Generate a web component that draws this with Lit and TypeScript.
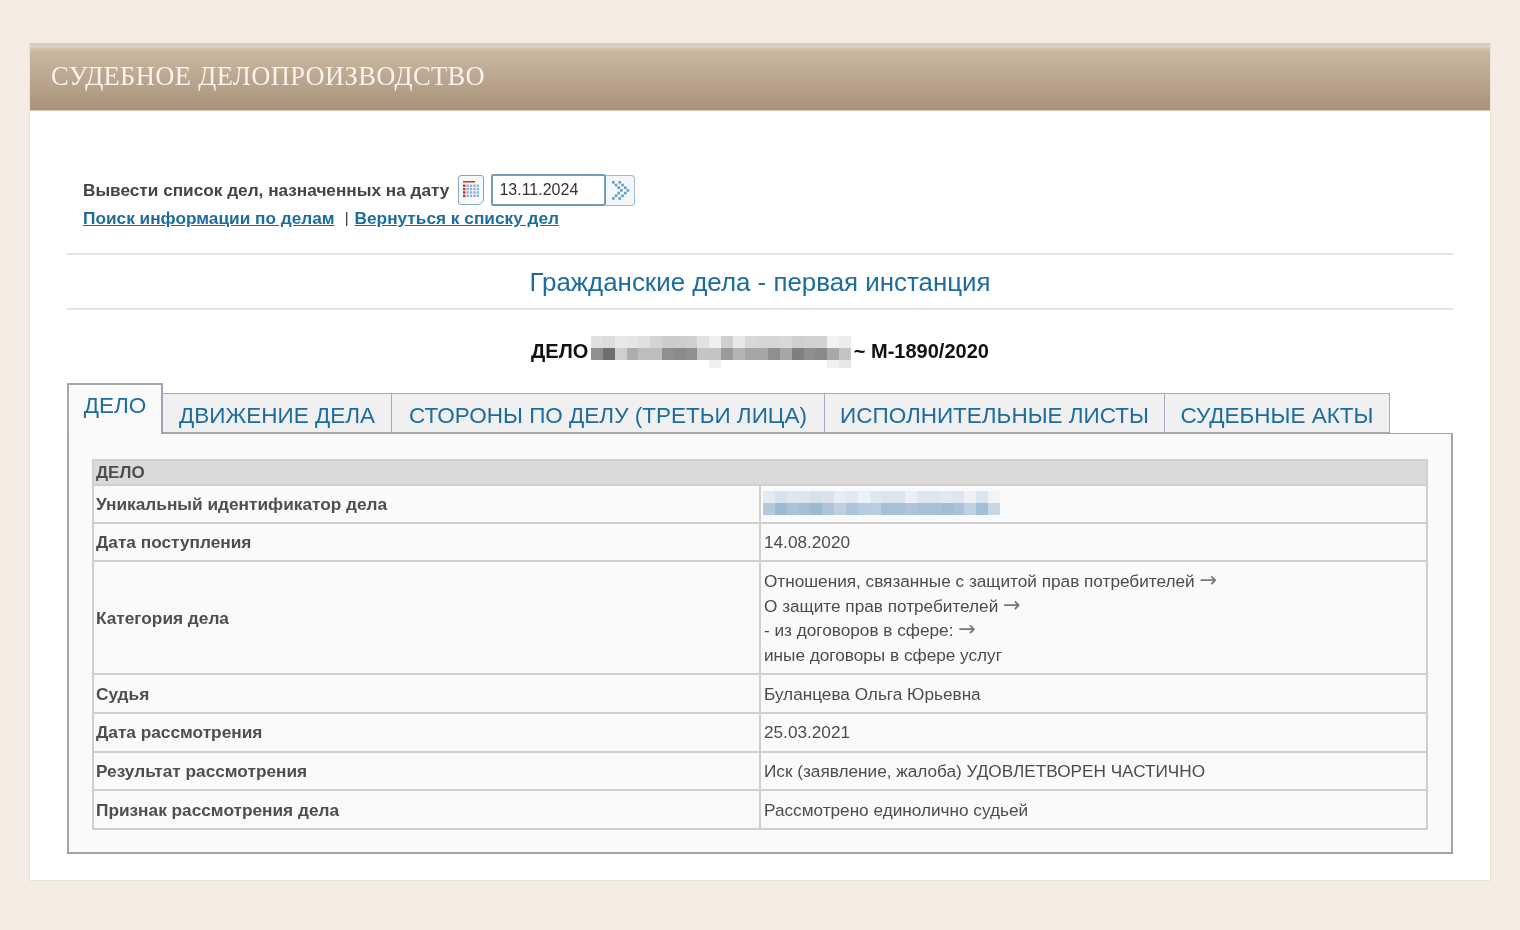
import { LitElement, html, css, svg } from "lit";
import { customElement } from "lit/decorators.js";

const GRAY_ROWS: string[][] = [
  ["#e0e0e0","#dcdcdc","#e8e8e8","#e6e6e6","#e0e0e0","#d4d4d4","#cccccc","#cdcdcd","#cfcfcf","#e2e2e2","#efefef","#cfcfcf","#e8e8e8","#d8d8d8","#d6d6d6","#d6d6d6","#d8d8d8","#cfcfcf","#d2d2d2","#d2d2d2","#f2f2f2","#ececec"],
  ["#8f8f8f","#6f6f6f","#cfcfcf","#adadad","#bdbdbd","#bdbdbd","#8f8f8f","#8a8a8a","#8f8f8f","#c4c4c4","#c4c4c4","#9a9a9a","#b4b4b4","#a6a6a6","#a6a6a6","#8f8f8f","#a6a6a6","#7f7f7f","#8f8f8f","#8a8a8a","#a8a8a8","#c4c4c4"],
  ["transparent","transparent","transparent","transparent","transparent","transparent","transparent","transparent","transparent","transparent","#f0f0f0","transparent","transparent","transparent","transparent","transparent","transparent","transparent","transparent","transparent","#f2f2f2","#e8e8e8"],
];
const BLUE_ROWS: string[][] = [
  ["#e4eaf3","#d6e2ec","#dde7ee","#dde6ef","#d5e2ec","#d9e3ee","#e8edf5","#e2e9f3","#edf2f6","#dfe7ef","#dbe5ec","#dbe5ec","#edf1f6","#dde5ee","#dde5ee","#e2e9f1","#dee5ee","#eef2f7","#dae5ee","#eff4f8"],
  ["#b3c9de","#9abad3","#a9c4da","#a2bfd6","#9ab9d2","#acc3da","#bfd1e1","#acc4da","#b7cbde","#b9cdde","#a5c0d7","#a7c1d8","#aec4da","#a9c1d8","#a9c1d8","#a0bed6","#a9c1d9","#bed0e1","#a3bfd6","#c8d7e4"],
];

const CAL_CELLS = [0, 1, 2, 3].flatMap((r) =>
  [0, 1, 2, 3, 4].map((c) => ({ r, c }))
);

@customElement("app-root")
export class AppRoot extends LitElement {
  static styles = css`
    :host {
      display: block;
      width: 1520px;
      height: 930px;
      background: #f5ece3;
      font-family: "Liberation Sans", Arial, sans-serif;
      color: #444;
      overflow: hidden;
    }
    .page { padding: 43px 29px 0; filter: blur(0.3px); }
    .card {
      height: 838px;
      box-sizing: border-box;
      background: #fff;
      border: 1px solid #ece1d6;
      border-top: none;
      display: flex;
      flex-direction: column;
    }
    .head {
      height: 68px;
      box-sizing: border-box;
      background: linear-gradient(#d8cbbb 0, #d8cbbb 1px, #ddd2c5 4px, #cfbfaa 6px, #c9b7a0 10px, #a9927a 100%);
      border-bottom: 1px solid #d6c7b6;
      display: flex;
      align-items: center;
      padding-left: 21px;
      font-family: "Liberation Serif", serif;
      font-size: 26.5px;
      letter-spacing: 0.36px;
      color: #f8f3ec;
    }
    .body { padding: 0 37px; display: flex; flex-direction: column; }
    .filters { padding: 63px 0 0 16px; height: 144px; box-sizing: border-box; border-bottom: 2px solid #e4e4e4; }
    .line1 { display: flex; align-items: center; height: 32px; }
    .lbl { font-weight: 700; font-size: 17.22px; color: #444; margin-right: 9px; }
    .calbtn {
      width: 26px; height: 30px; box-sizing: border-box;
      border: 1.5px solid #7fa6c5; border-radius: 3px 3px 6px 3px; background: #f7f9fb;
      display: flex; align-items: center; justify-content: center; margin-right: 7px;
    }
    .date {
      width: 115px; height: 32px; box-sizing: border-box;
      border: 2px solid #6f9bbd; border-radius: 2px;
      font-size: 16px; color: #333; padding-left: 6px;
      display: flex; align-items: center;
    }
    .gobtn {
      width: 29px; height: 31px; box-sizing: border-box;
      border: 1.5px solid #9dbad2; border-left: none; border-radius: 0 4px 4px 0;
      background: #f4f7fa; display: flex; align-items: center; justify-content: center;
    }
    .line2 { display: flex; align-items: center; margin-top: 2px; font-size: 17.25px; line-height: 20px; font-weight: 700; }
    .line2 a { color: #1c6c9f; text-decoration: underline; }
    .sep { color: #333; font-weight: 400; margin: 0 6px 0 10px; font-size: 15px; }
    .title {
      height: 55px; box-sizing: border-box; border-bottom: 2px solid #e4e4e4;
      display: flex; align-items: center; justify-content: center;
      font-size: 25.9px; color: #1c6c9f; padding-top: 2px;
    }
    .case {
      display: flex; justify-content: center; align-items: flex-start;
      height: 73px; box-sizing: border-box; padding-top: 26px;
      font-weight: 700; font-size: 20px; line-height: 30px; color: #111;
    }
    .case .txt { line-height: 31px; }
    .pix { display: flex; flex-direction: column; margin: 0 3px; }
    .pix .r { display: flex; }
    .pix i { display: block; width: 11.8px; height: 12px; }
    .pix .r.s i { height: 8px; }
    .tabs { display: flex; align-items: flex-end; height: 50px; position: relative; z-index: 1; }
    .tab {
      height: 40px; box-sizing: border-box; background: #f0f0f0;
      border: 1px solid #a9a6cf; border-left: none;
      border-bottom: 1px solid #a8a8a8;
      display: flex; align-items: center; justify-content: center;
      font-size: 22.5px; color: #1c6c9f; padding-top: 5px;
    }
    .tab.active {
      height: 51px; width: 96px; margin-bottom: -1px; background: #fafafa; align-items: flex-start;
      border: 2px solid #a8a8a8; border-bottom: none; border-right-color: #a0a0c8;
      padding-top: 8px;
    }
    .panel {
      height: 421px; box-sizing: border-box; background: #fafafa;
      border: 2px solid #a4a4a4; border-top-width: 1px;
      padding: 25px 23px 0;
    }
    table {
      width: 1336px; border-collapse: collapse; table-layout: fixed;
      border: 2px solid #cfcfcf; font-size: 17.2px; color: #4c4c4c; line-height: 25px;
    }
    col.a { width: 667px; }
    th {
      background: #dadada; text-align: left; height: 23px; padding: 0 2px;
      font-weight: 700; font-size: 17px; line-height: 23px; color: #4e4e4e; border-bottom: 2px solid #cfcfcf;
    }
    td { padding: 0 2px; border: 2px solid #cfcfcf; vertical-align: middle; }
    td.k { font-weight: 700; font-size: 17.25px; color: #4e4e4e; }
    td.v { padding-left: 3px; }
    .h38 { height: 38px; } .h39 { height: 39px; }
    tr.lo td { padding-top: 2px; }
    tr.cat td.k { padding-top: 2px; }
    .multi { padding: 7px 0 5px; line-height: 24.7px; }
    .arr { font-family: "DejaVu Sans", sans-serif; font-size: 21px; line-height: 1; color: #777; }
    .idpix { display: flex; flex-direction: column; margin: -2px 0 0 -1px; }
    .idpix .r { display: flex; }
    .idpix i { display: block; width: 11.85px; height: 12px; }
  `;

  calIcon() {
    return svg`<svg width="19" height="20" viewBox="0 0 19 20">
      <rect x="1" y="1" width="12" height="1.6" fill="#c0403a"/>
      ${CAL_CELLS.map(({ r, c }) => svg`<rect x="${1 + c * 3.4}" y="${4.5 + r * 3.4}" width="2.4" height="2.4" fill="${c === 0 ? "#b9352f" : "#8db2d2"}"/>`)}
    </svg>`;
  }

  goIcon() {
    const pts = [0, 6.5].flatMap((dx) =>
      [[0,0],[2.7,2.7],[5.4,5.4],[8.1,8.1],[5.4,10.8],[2.7,13.5],[0,16.2]].map(([x, y]) => [x + dx, y])
    );
    return svg`<svg width="19" height="20" viewBox="-1 -1 19 20">
      ${pts.map(([x, y]) => svg`<rect x="${x}" y="${y}" width="2.6" height="2.6" fill="#5f9dcd"/>`)}
    </svg>`;
  }

  pix(rows: string[][], cls: string) {
    return html`<div class=${cls}>
      ${rows.map((row, i) => html`<div class="r ${i === 2 ? "s" : ""}">
        ${row.map((c) => html`<i style="background:${c}"></i>`)}
      </div>`)}
    </div>`;
  }

  render() {
    return html`
      <div class="page">
        <div class="card">
          <div class="head">СУДЕБНОЕ ДЕЛОПРОИЗВОДСТВО</div>
          <div class="body">
            <div class="filters">
              <div class="line1">
                <span class="lbl">Вывести список дел, назначенных на дату</span>
                <span class="calbtn">${this.calIcon()}</span>
                <span class="date">13.11.2024</span>
                <span class="gobtn">${this.goIcon()}</span>
              </div>
              <div class="line2">
                <a href="#">Поиск информации по делам</a>
                <span class="sep">|</span>
                <a href="#">Вернуться к списку дел</a>
              </div>
            </div>
            <div class="title">Гражданские дела - первая инстанция</div>
            <div class="case">
              <span class="txt">ДЕЛО</span>
              ${this.pix(GRAY_ROWS, "pix")}
              <span class="txt">~ М-1890/2020</span>
            </div>
            <div class="tabs">
              <div class="tab active">ДЕЛО</div>
              <div class="tab" style="width:229px">ДВИЖЕНИЕ ДЕЛА</div>
              <div class="tab" style="width:433px">СТОРОНЫ ПО ДЕЛУ (ТРЕТЬИ ЛИЦА)</div>
              <div class="tab" style="width:340px">ИСПОЛНИТЕЛЬНЫЕ ЛИСТЫ</div>
              <div class="tab" style="width:225px">СУДЕБНЫЕ АКТЫ</div>
            </div>
            <div class="panel">
              <table>
                <colgroup><col class="a" /><col /></colgroup>
                <tr><th colspan="2">ДЕЛО</th></tr>
                <tr class="h38"><td class="k">Уникальный идентификатор дела</td><td class="v">${this.pix(BLUE_ROWS, "idpix")}</td></tr>
                <tr class="h38"><td class="k">Дата поступления</td><td class="v">14.08.2020</td></tr>
                <tr class="cat">
                  <td class="k">Категория дела</td>
                  <td class="v"><div class="multi">Отношения, связанные с защитой прав потребителей <span class="arr">→</span><br />О защите прав потребителей <span class="arr">→</span><br />- из договоров в сфере: <span class="arr">→</span><br />иные договоры в сфере услуг</div></td>
                </tr>
                <tr class="h39 lo"><td class="k">Судья</td><td class="v">Буланцева Ольга Юрьевна</td></tr>
                <tr class="h39"><td class="k">Дата рассмотрения</td><td class="v">25.03.2021</td></tr>
                <tr class="h38 lo"><td class="k">Результат рассмотрения</td><td class="v">Иск (заявление, жалоба) УДОВЛЕТВОРЕН ЧАСТИЧНО</td></tr>
                <tr class="h39 lo"><td class="k">Признак рассмотрения дела</td><td class="v">Рассмотрено единолично судьей</td></tr>
              </table>
            </div>
          </div>
        </div>
      </div>
    `;
  }
}
